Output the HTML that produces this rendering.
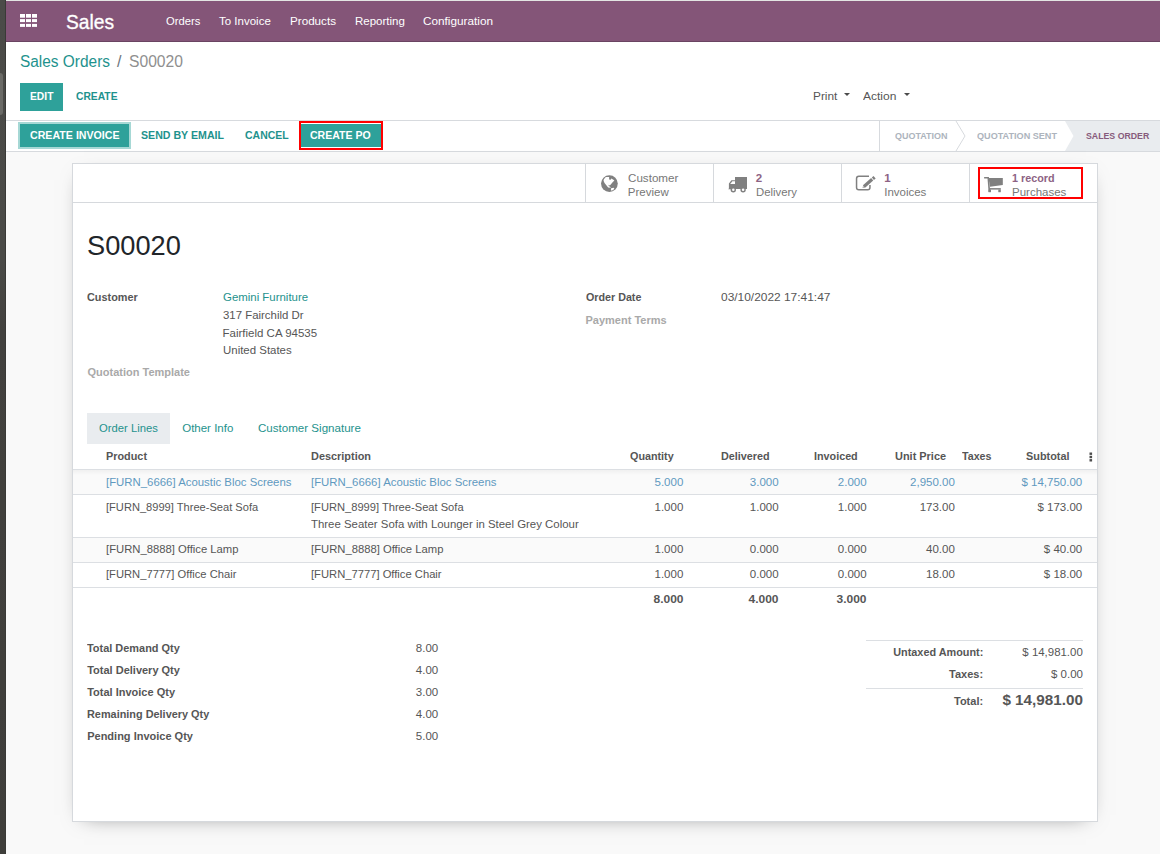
<!DOCTYPE html>
<html><head><meta charset="utf-8"><style>
html,body{margin:0;padding:0;width:1160px;height:854px;overflow:hidden;background:#f9f9f9;font-family:'Liberation Sans', sans-serif;}
.t{position:absolute;white-space:nowrap;}
.r{position:absolute;}
</style></head><body>
<!-- left desktop strip -->
<div class="r" style="left:0;top:0;width:6px;height:854px;background:linear-gradient(#4b4b48 0,#4a4a47 260px,#42413e 330px,#3f3e3b 854px)"></div>
<div class="r" style="left:5px;top:0;width:1px;height:854px;background:#3a3a37"></div>
<div class="r" style="left:-3px;top:73px;width:5.5px;height:42px;background:#6a6a66;border-radius:3px"></div>
<div class="r" style="left:6px;top:0;width:1154px;height:1px;background:#e3e5e3"></div>
<!-- navbar -->
<div class="r" style="left:6px;top:1px;width:1154px;height:41px;background:#845578;border-bottom:1px solid #6a4462;box-sizing:border-box"></div>
<svg class="r" style="left:20px;top:14px" width="18" height="14" viewBox="0 0 18 14">
<g fill="#fff"><rect x="0" y="0" width="5" height="3.7"/><rect x="6" y="0" width="5" height="3.7"/><rect x="12" y="0" width="5" height="3.7"/>
<rect x="0" y="5.1" width="5" height="3"/><rect x="6" y="5.1" width="5" height="3"/><rect x="12" y="5.1" width="5" height="3"/>
<rect x="0" y="9.9" width="5" height="3"/><rect x="6" y="9.9" width="5" height="3"/><rect x="12" y="9.9" width="5" height="3"/></g></svg>
<!-- control panel -->
<div class="r" style="left:6px;top:42px;width:1154px;height:78px;background:#fff"></div>
<div class="r" style="left:20px;top:83px;width:43px;height:28px;background:#2ea19a"></div>
<svg class="r" style="left:844px;top:93px" width="6" height="3"><path d="M0 0H6L3 3Z" fill="#4c4c4c"/></svg>
<svg class="r" style="left:904px;top:93px" width="6" height="3"><path d="M0 0H6L3 3Z" fill="#4c4c4c"/></svg>
<!-- statusbar -->
<div class="r" style="left:6px;top:120px;width:1154px;height:32px;background:#fff;border-top:1px solid #d7dade;border-bottom:1px solid #d7dade;box-sizing:border-box"></div>
<div class="r" style="left:18px;top:122px;width:113px;height:27px;background:#a6d8d5"></div>
<div class="r" style="left:20px;top:124px;width:109px;height:23px;background:#2ea19a"></div>
<div class="r" style="left:299px;top:121px;width:84px;height:29px;border:2px solid #ff0000;box-sizing:border-box;background:#fff"></div>
<div class="r" style="left:301px;top:124px;width:80px;height:23px;background:#2ea19a"></div>
<!-- stages -->
<div class="r" style="left:879px;top:121px;width:1px;height:30px;background:#d7dade"></div>
<svg class="r" style="left:950px;top:121px" width="20" height="30"><path d="M6 0L15 15L6 30" fill="none" stroke="#d7dade" stroke-width="1"/></svg>
<svg class="r" style="left:1060px;top:121px" width="100" height="30"><path d="M5 0H100V30H5L13.5 15Z" fill="#e9ecef"/></svg>
<!-- sheet -->
<div class="r" style="left:72px;top:163px;width:1026px;height:659px;background:#fff;border:1px solid #d6d9dd;box-sizing:border-box;box-shadow:0 5px 20px -12px rgba(0,0,0,0.55)"></div>
<div class="r" style="left:73px;top:202px;width:1024px;height:1px;background:#d6d9dd"></div>
<div class="r" style="left:585px;top:164px;width:1px;height:38px;background:#d6d9dd"></div>
<div class="r" style="left:713px;top:164px;width:1px;height:38px;background:#d6d9dd"></div>
<div class="r" style="left:841px;top:164px;width:1px;height:38px;background:#d6d9dd"></div>
<div class="r" style="left:969px;top:164px;width:1px;height:38px;background:#d6d9dd"></div>
<!-- globe icon -->
<svg class="r" style="left:601px;top:175px" width="18" height="18" viewBox="0 0 18 18">
<circle cx="8.4" cy="8.6" r="8.4" fill="#808080"/>
<path d="M2.87 4.18 L4.84 2.05 L8.11 2.05 L8.11 4.51 L9.75 4.84 L10.08 3.52 L12.05 4.51 L13.36 5.49 L11.39 7.46 L9.75 9.43 L8.77 10.41 L7.46 9.75 L7.79 11.07 L9.43 12.05 L9.75 12.87 L7.13 12.38 L5.16 10.08 L3.52 8.11 L2.54 5.82 Z M10.08 13.36 L12.7 12.87 L13.36 14.02 L10.74 15.82 L9.9 15 Z" fill="#fff"/>
</svg>
<!-- truck icon -->
<svg class="r" style="left:728px;top:177px" width="20" height="16" viewBox="0 0 20 16">
<rect x="7" y="0" width="12" height="12" fill="#808080"/>
<path d="M0.2 12.2 L0.9 11.6 V6.4 L3.4 3.2 H7.5 V12.2 Z" fill="#808080"/>
<path d="M2.2 6.9 L4.4 4.2 H7 V6.9 Z" fill="#fff"/>
<circle cx="5.3" cy="12.7" r="2.7" fill="#808080"/><circle cx="5.3" cy="12.7" r="1.25" fill="#fff"/>
<circle cx="15.1" cy="12.7" r="2.7" fill="#808080"/><circle cx="15.1" cy="12.7" r="1.25" fill="#fff"/>
</svg>
<!-- invoice edit icon -->
<svg class="r" style="left:855px;top:175px" width="22" height="17" viewBox="0 0 22 17">
<path d="M14 1.15 H3.8 Q1.55 1.15 1.55 3.4 V12.4 Q1.55 14.65 3.8 14.65 H12.7 Q14.95 14.65 14.95 12.4 V10" fill="none" stroke="#808080" stroke-width="1.5"/>
<path d="M8.24 10.1 L16.14 3.1 L18.26 5.5 L10.36 12.5 L7.6 13.1 Z" fill="#808080"/>
<path d="M16.84 2.5 L18.54 1.0 L20.66 3.4 L18.96 4.9 Z" fill="#808080"/>
<path d="M8.4 11.1 L9.5 12.2 L8.2 12.5 Z" fill="#fff"/>
</svg>
<!-- cart icon -->
<svg class="r" style="left:984px;top:177px" width="20" height="16" viewBox="0 0 20 16">
<g fill="#808080">
<path d="M0.1 0 H4.6 L4.9 1.4 H0.1 Z"/>
<path d="M3.4 0 H4.8 L6.3 15 H4.6 Z"/>
<path d="M4.5 1.0 H18.8 V7.9 L6 9.7 Z"/>
<rect x="5.4" y="11.1" width="11.4" height="1.5"/>
<rect x="4.5" y="12.5" width="2.5" height="2.7"/>
<rect x="14.3" y="12.5" width="2.5" height="2.7"/>
</g>
</svg>
<div class="r" style="left:978px;top:167px;width:105px;height:32px;border:2px solid #ff0000;box-sizing:border-box"></div>
<!-- tabs -->
<div class="r" style="left:87px;top:413px;width:83px;height:31px;background:#e9ecef"></div>
<!-- table -->
<div class="r" style="left:73px;top:469px;width:1024px;height:1px;background:#dcdfe3"></div>
<div class="r" style="left:73px;top:470px;width:1024px;height:24px;background:#fafafa"></div>
<div class="r" style="left:73px;top:470px;width:1024px;height:5px;background:linear-gradient(rgba(0,0,0,0.04),rgba(0,0,0,0))"></div>
<div class="r" style="left:73px;top:494px;width:1024px;height:1px;background:#dcdfe3"></div>
<div class="r" style="left:73px;top:537px;width:1024px;height:1px;background:#dcdfe3"></div>
<div class="r" style="left:73px;top:538px;width:1024px;height:24px;background:#fafafa"></div>
<div class="r" style="left:73px;top:562px;width:1024px;height:1px;background:#dcdfe3"></div>
<div class="r" style="left:73px;top:587px;width:1024px;height:1px;background:#dcdfe3"></div>
<svg class="r" style="left:1089px;top:452px" width="4" height="10"><g fill="#4c4c4c"><rect x="0.5" y="0.5" width="2.6" height="2.4"/><rect x="0.5" y="3.8" width="2.6" height="2.4"/><rect x="0.5" y="7.1" width="2.6" height="2.4"/></g></svg>
<!-- totals right lines -->
<div class="r" style="left:866px;top:640px;width:217px;height:1px;background:#dcdfe3"></div>
<div class="r" style="left:866px;top:688px;width:217px;height:1px;background:#dcdfe3"></div>

<div class="t" style="top:10.62px;font-size:21px;line-height:21px;color:#fff;left:66.40px;transform:scaleX(0.9137);transform-origin:left;-webkit-text-stroke:0.35px #fff;">Sales</div>
<div class="t" style="top:15.97px;font-size:11.5px;line-height:11.5px;color:#fff;left:166.30px;transform:scaleX(0.9756);transform-origin:left;">Orders</div>
<div class="t" style="top:15.97px;font-size:11.5px;line-height:11.5px;color:#fff;left:219.00px;">To Invoice</div>
<div class="t" style="top:15.97px;font-size:11.5px;line-height:11.5px;color:#fff;left:290.00px;transform:scaleX(1.0134);transform-origin:left;">Products</div>
<div class="t" style="top:15.97px;font-size:11.5px;line-height:11.5px;color:#fff;left:355.00px;">Reporting</div>
<div class="t" style="top:15.97px;font-size:11.5px;line-height:11.5px;color:#fff;left:423.00px;transform:scaleX(1.0233);transform-origin:left;">Configuration</div>
<div class="t" style="top:54.46px;font-size:16px;line-height:16px;color:#1e928d;left:19.80px;transform:scaleX(0.9639);transform-origin:left;">Sales Orders</div>
<div class="t" style="top:54.46px;font-size:16px;line-height:16px;color:#6c757d;left:117.00px;">/</div>
<div class="t" style="top:54.46px;font-size:16px;line-height:16px;color:#8f8f8f;left:128.60px;transform:scaleX(0.9788);transform-origin:left;">S00020</div>
<div class="t" style="top:91.36px;font-size:10.8px;line-height:10.8px;color:#fff;font-weight:700;left:30.00px;transform:scaleX(0.9515);transform-origin:left;">EDIT</div>
<div class="t" style="top:91.36px;font-size:10.8px;line-height:10.8px;color:#1e928d;font-weight:700;left:76.30px;transform:scaleX(0.9520);transform-origin:left;">CREATE</div>
<div class="t" style="top:90.57px;font-size:11.5px;line-height:11.5px;color:#565656;left:812.60px;transform:scaleX(1.0314);transform-origin:left;">Print</div>
<div class="t" style="top:90.57px;font-size:11.5px;line-height:11.5px;color:#565656;left:863.30px;transform:scaleX(1.0448);transform-origin:left;">Action</div>
<div class="t" style="top:129.76px;font-size:10.8px;line-height:10.8px;color:#fff;font-weight:700;left:29.70px;transform:scaleX(0.9848);transform-origin:left;">CREATE INVOICE</div>
<div class="t" style="top:129.76px;font-size:10.8px;line-height:10.8px;color:#1e928d;font-weight:700;left:140.80px;transform:scaleX(0.9835);transform-origin:left;">SEND BY EMAIL</div>
<div class="t" style="top:129.76px;font-size:10.8px;line-height:10.8px;color:#1e928d;font-weight:700;left:245.40px;transform:scaleX(0.9711);transform-origin:left;">CANCEL</div>
<div class="t" style="top:129.76px;font-size:10.8px;line-height:10.8px;color:#fff;font-weight:700;left:310.40px;transform:scaleX(0.9745);transform-origin:left;">CREATE PO</div>
<div class="t" style="top:130.77px;font-size:9.6px;line-height:9.6px;color:#adb4bd;font-weight:700;left:894.60px;transform:scaleX(0.9369);transform-origin:left;">QUOTATION</div>
<div class="t" style="top:130.77px;font-size:9.6px;line-height:9.6px;color:#adb4bd;font-weight:700;left:976.70px;transform:scaleX(0.9480);transform-origin:left;">QUOTATION SENT</div>
<div class="t" style="top:130.77px;font-size:9.6px;line-height:9.6px;color:#875a7b;font-weight:700;left:1086.00px;transform:scaleX(0.9133);transform-origin:left;">SALES ORDER</div>
<div class="t" style="top:172.67px;font-size:11.5px;line-height:11.5px;color:#777;left:627.80px;transform:scaleX(1.0108);transform-origin:left;">Customer</div>
<div class="t" style="top:186.77px;font-size:11.5px;line-height:11.5px;color:#777;left:627.80px;">Preview</div>
<div class="t" style="top:172.77px;font-size:11.5px;line-height:11.5px;color:#8d6384;font-weight:700;left:755.80px;">2</div>
<div class="t" style="top:187.07px;font-size:11.5px;line-height:11.5px;color:#777;left:755.80px;transform:scaleX(0.9868);transform-origin:left;">Delivery</div>
<div class="t" style="top:172.77px;font-size:11.5px;line-height:11.5px;color:#8d6384;font-weight:700;left:884.20px;">1</div>
<div class="t" style="top:187.07px;font-size:11.5px;line-height:11.5px;color:#777;left:884.20px;">Invoices</div>
<div class="t" style="top:172.77px;font-size:11.5px;line-height:11.5px;color:#8d6384;font-weight:700;left:1012.00px;transform:scaleX(0.9385);transform-origin:left;">1 record</div>
<div class="t" style="top:187.07px;font-size:11.5px;line-height:11.5px;color:#777;left:1012.00px;">Purchases</div>
<div class="t" style="top:231.80px;font-size:28px;line-height:28px;color:#212529;left:86.60px;transform:scaleX(0.9715);transform-origin:left;">S00020</div>
<div class="t" style="top:292.19px;font-size:11px;line-height:11px;color:#565656;font-weight:700;left:87.40px;transform:scaleX(0.9875);transform-origin:left;">Customer</div>
<div class="t" style="top:292.07px;font-size:11.5px;line-height:11.5px;color:#1e928d;left:222.70px;transform:scaleX(0.9937);transform-origin:left;">Gemini Furniture</div>
<div class="t" style="top:309.67px;font-size:11.5px;line-height:11.5px;color:#565656;left:222.50px;transform:scaleX(0.9917);transform-origin:left;">317 Fairchild Dr</div>
<div class="t" style="top:327.57px;font-size:11.5px;line-height:11.5px;color:#565656;left:222.50px;">Fairfield CA 94535</div>
<div class="t" style="top:344.97px;font-size:11.5px;line-height:11.5px;color:#565656;left:222.50px;transform:scaleX(0.9950);transform-origin:left;">United States</div>
<div class="t" style="top:367.29px;font-size:11px;line-height:11px;color:#a9a9a9;font-weight:700;left:87.50px;">Quotation Template</div>
<div class="t" style="top:292.09px;font-size:11px;line-height:11px;color:#565656;font-weight:700;left:585.50px;transform:scaleX(0.9743);transform-origin:left;">Order Date</div>
<div class="t" style="top:291.67px;font-size:11.5px;line-height:11.5px;color:#565656;left:720.50px;transform:scaleX(1.0367);transform-origin:left;">03/10/2022 17:41:47</div>
<div class="t" style="top:314.69px;font-size:11px;line-height:11px;color:#a9a9a9;font-weight:700;left:585.50px;">Payment Terms</div>
<div class="t" style="top:422.57px;font-size:11.5px;line-height:11.5px;color:#1e928d;left:99.40px;transform:scaleX(0.9785);transform-origin:left;">Order Lines</div>
<div class="t" style="top:422.57px;font-size:11.5px;line-height:11.5px;color:#1e928d;left:182.20px;">Other Info</div>
<div class="t" style="top:422.57px;font-size:11.5px;line-height:11.5px;color:#1e928d;left:257.60px;transform:scaleX(1.0060);transform-origin:left;">Customer Signature</div>
<div class="t" style="top:451.09px;font-size:11px;line-height:11px;color:#565656;font-weight:700;left:106.00px;transform:scaleX(0.9865);transform-origin:left;">Product</div>
<div class="t" style="top:451.09px;font-size:11px;line-height:11px;color:#565656;font-weight:700;left:311.10px;transform:scaleX(0.9915);transform-origin:left;">Description</div>
<div class="t" style="top:451.09px;font-size:11px;line-height:11px;color:#565656;font-weight:700;left:630.20px;transform:scaleX(0.9793);transform-origin:left;">Quantity</div>
<div class="t" style="top:451.09px;font-size:11px;line-height:11px;color:#565656;font-weight:700;left:720.50px;transform:scaleX(0.9832);transform-origin:left;">Delivered</div>
<div class="t" style="top:451.09px;font-size:11px;line-height:11px;color:#565656;font-weight:700;left:813.50px;transform:scaleX(0.9793);transform-origin:left;">Invoiced</div>
<div class="t" style="top:451.09px;font-size:11px;line-height:11px;color:#565656;font-weight:700;left:894.50px;transform:scaleX(0.9949);transform-origin:left;">Unit Price</div>
<div class="t" style="top:451.09px;font-size:11px;line-height:11px;color:#565656;font-weight:700;left:962.40px;transform:scaleX(0.9712);transform-origin:left;">Taxes</div>
<div class="t" style="top:451.09px;font-size:11px;line-height:11px;color:#565656;font-weight:700;left:1026.00px;transform:scaleX(0.9886);transform-origin:left;">Subtotal</div>
<div class="t" style="top:476.87px;font-size:11.5px;line-height:11.5px;color:#5f99c0;left:106.10px;transform:scaleX(0.9900);transform-origin:left;">[FURN_6666] Acoustic Bloc Screens</div>
<div class="t" style="top:476.87px;font-size:11.5px;line-height:11.5px;color:#5f99c0;left:311.10px;transform:scaleX(0.9900);transform-origin:left;">[FURN_6666] Acoustic Bloc Screens</div>
<div class="t" style="top:476.87px;font-size:11.5px;line-height:11.5px;color:#5f99c0;right:476.70px;">5.000</div>
<div class="t" style="top:476.87px;font-size:11.5px;line-height:11.5px;color:#5f99c0;right:381.40px;">3.000</div>
<div class="t" style="top:476.87px;font-size:11.5px;line-height:11.5px;color:#5f99c0;right:293.40px;">2.000</div>
<div class="t" style="top:476.87px;font-size:11.5px;line-height:11.5px;color:#5f99c0;right:205.20px;">2,950.00</div>
<div class="t" style="top:476.87px;font-size:11.5px;line-height:11.5px;color:#5f99c0;right:77.80px;">$ 14,750.00</div>
<div class="t" style="top:502.07px;font-size:11.5px;line-height:11.5px;color:#565656;left:106.10px;transform:scaleX(0.9652);transform-origin:left;">[FURN_8999] Three-Seat Sofa</div>
<div class="t" style="top:502.07px;font-size:11.5px;line-height:11.5px;color:#565656;left:311.10px;transform:scaleX(0.9677);transform-origin:left;">[FURN_8999] Three-Seat Sofa</div>
<div class="t" style="top:502.07px;font-size:11.5px;line-height:11.5px;color:#565656;right:476.70px;">1.000</div>
<div class="t" style="top:502.07px;font-size:11.5px;line-height:11.5px;color:#565656;right:381.40px;">1.000</div>
<div class="t" style="top:502.07px;font-size:11.5px;line-height:11.5px;color:#565656;right:293.40px;">1.000</div>
<div class="t" style="top:502.07px;font-size:11.5px;line-height:11.5px;color:#565656;right:205.20px;">173.00</div>
<div class="t" style="top:502.07px;font-size:11.5px;line-height:11.5px;color:#565656;right:77.80px;">$ 173.00</div>
<div class="t" style="top:543.67px;font-size:11.5px;line-height:11.5px;color:#565656;left:106.10px;transform:scaleX(0.9793);transform-origin:left;">[FURN_8888] Office Lamp</div>
<div class="t" style="top:543.67px;font-size:11.5px;line-height:11.5px;color:#565656;left:311.10px;transform:scaleX(0.9786);transform-origin:left;">[FURN_8888] Office Lamp</div>
<div class="t" style="top:543.67px;font-size:11.5px;line-height:11.5px;color:#565656;right:476.70px;">1.000</div>
<div class="t" style="top:543.67px;font-size:11.5px;line-height:11.5px;color:#565656;right:381.40px;">0.000</div>
<div class="t" style="top:543.67px;font-size:11.5px;line-height:11.5px;color:#565656;right:293.40px;">0.000</div>
<div class="t" style="top:543.67px;font-size:11.5px;line-height:11.5px;color:#565656;right:205.20px;">40.00</div>
<div class="t" style="top:543.67px;font-size:11.5px;line-height:11.5px;color:#565656;right:77.80px;">$ 40.00</div>
<div class="t" style="top:568.87px;font-size:11.5px;line-height:11.5px;color:#565656;left:106.10px;transform:scaleX(0.9730);transform-origin:left;">[FURN_7777] Office Chair</div>
<div class="t" style="top:568.87px;font-size:11.5px;line-height:11.5px;color:#565656;left:311.10px;transform:scaleX(0.9745);transform-origin:left;">[FURN_7777] Office Chair</div>
<div class="t" style="top:568.87px;font-size:11.5px;line-height:11.5px;color:#565656;right:476.70px;">1.000</div>
<div class="t" style="top:568.87px;font-size:11.5px;line-height:11.5px;color:#565656;right:381.40px;">0.000</div>
<div class="t" style="top:568.87px;font-size:11.5px;line-height:11.5px;color:#565656;right:293.40px;">0.000</div>
<div class="t" style="top:568.87px;font-size:11.5px;line-height:11.5px;color:#565656;right:205.20px;">18.00</div>
<div class="t" style="top:568.87px;font-size:11.5px;line-height:11.5px;color:#565656;right:77.80px;">$ 18.00</div>
<div class="t" style="top:519.27px;font-size:11.5px;line-height:11.5px;color:#565656;left:311.10px;transform:scaleX(0.9923);transform-origin:left;">Three Seater Sofa with Lounger in Steel Grey Colour</div>
<div class="t" style="top:594.29px;font-size:11px;line-height:11px;color:#565656;font-weight:700;right:476.70px;transform:scaleX(1.0897);transform-origin:right;">8.000</div>
<div class="t" style="top:594.29px;font-size:11px;line-height:11px;color:#565656;font-weight:700;right:381.40px;transform:scaleX(1.0897);transform-origin:right;">4.000</div>
<div class="t" style="top:594.29px;font-size:11px;line-height:11px;color:#565656;font-weight:700;right:293.40px;transform:scaleX(1.0897);transform-origin:right;">3.000</div>
<div class="t" style="top:642.59px;font-size:11px;line-height:11px;color:#565656;font-weight:700;left:87.20px;transform:scaleX(0.9945);transform-origin:left;">Total Demand Qty</div>
<div class="t" style="top:642.67px;font-size:11.5px;line-height:11.5px;color:#565656;right:721.80px;">8.00</div>
<div class="t" style="top:665.19px;font-size:11px;line-height:11px;color:#565656;font-weight:700;left:87.20px;">Total Delivery Qty</div>
<div class="t" style="top:665.27px;font-size:11.5px;line-height:11.5px;color:#565656;right:721.80px;">4.00</div>
<div class="t" style="top:687.09px;font-size:11px;line-height:11px;color:#565656;font-weight:700;left:87.20px;">Total Invoice Qty</div>
<div class="t" style="top:687.17px;font-size:11.5px;line-height:11.5px;color:#565656;right:721.80px;">3.00</div>
<div class="t" style="top:709.39px;font-size:11px;line-height:11px;color:#565656;font-weight:700;left:87.20px;transform:scaleX(0.9895);transform-origin:left;">Remaining Delivery Qty</div>
<div class="t" style="top:709.47px;font-size:11.5px;line-height:11.5px;color:#565656;right:721.80px;">4.00</div>
<div class="t" style="top:730.79px;font-size:11px;line-height:11px;color:#565656;font-weight:700;left:87.20px;">Pending Invoice Qty</div>
<div class="t" style="top:730.87px;font-size:11.5px;line-height:11.5px;color:#565656;right:721.80px;">5.00</div>
<div class="t" style="top:647.19px;font-size:11px;line-height:11px;color:#565656;font-weight:700;right:176.90px;transform:scaleX(0.9861);transform-origin:right;">Untaxed Amount:</div>
<div class="t" style="top:646.77px;font-size:11.5px;line-height:11.5px;color:#565656;right:77.00px;transform:scaleX(0.9940);transform-origin:right;">$ 14,981.00</div>
<div class="t" style="top:669.29px;font-size:11px;line-height:11px;color:#565656;font-weight:700;right:176.90px;">Taxes:</div>
<div class="t" style="top:668.87px;font-size:11.5px;line-height:11.5px;color:#565656;right:77.00px;">$ 0.00</div>
<div class="t" style="top:695.79px;font-size:11px;line-height:11px;color:#565656;font-weight:700;right:176.90px;">Total:</div>
<div class="t" style="top:691.98px;font-size:15.5px;line-height:15.5px;color:#565656;font-weight:700;right:77.00px;transform:scaleX(0.9830);transform-origin:right;">$ 14,981.00</div>
</body></html>
